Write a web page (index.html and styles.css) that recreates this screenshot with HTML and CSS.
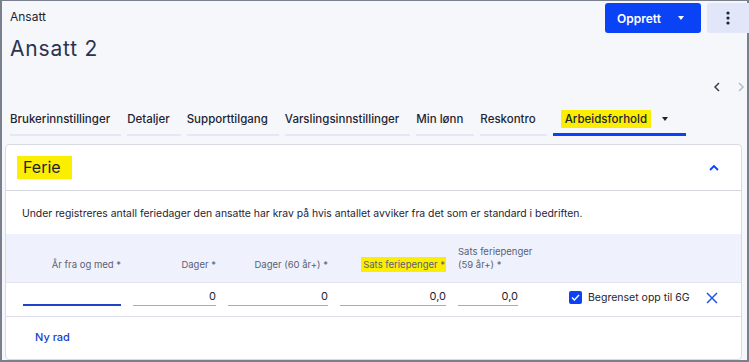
FILE: index.html
```html
<!DOCTYPE html>
<html lang="no">
<head>
<meta charset="utf-8">
<link rel="stylesheet" href="styles.css">
</head>
<body>
<div class="frame">
  <header class="top">
    <div class="titles">
      <div class="crumb">Ansatt</div>
      <h1 class="title">Ansatt 2</h1>
    </div>
    <div class="actions">
      <button class="btn-primary">Opprett <span class="caret-w"></span></button>
      <button class="btn-more"><svg width="4" height="14" viewBox="0 0 4 14"><circle cx="2" cy="2" r="1.6"/><circle cx="2" cy="7" r="1.6"/><circle cx="2" cy="12" r="1.6"/></svg></button>
    </div>
  </header>
  <div class="pager">
    <svg class="pg on" width="8" height="10" viewBox="0 0 8 10"><path d="M6 1 L2 5 L6 9" fill="none" stroke="currentColor" stroke-width="1.5"/></svg>
    <svg class="pg off" width="8" height="10" viewBox="0 0 8 10"><path d="M2 1 L6 5 L2 9" fill="none" stroke="currentColor" stroke-width="1.5"/></svg>
  </div>
  <nav class="tabs">
    <div class="tab">Brukerinnstillinger</div>
    <div class="tab">Detaljer</div>
    <div class="tab">Supporttilgang</div>
    <div class="tab">Varslingsinnstillinger</div>
    <div class="tab">Min lønn</div>
    <div class="tab">Reskontro</div>
    <div class="tab active"><span class="hl">Arbeidsforhold</span><span class="caret-d"></span></div>
  </nav>
  <section class="card">
    <div class="card-head">
      <h2 class="card-title"><span class="hl hl-big">Ferie</span></h2>
      <svg class="chev" width="10" height="7" viewBox="0 0 10 7"><path d="M1 6 L5 2 L9 6" fill="none" stroke="currentColor" stroke-width="1.8"/></svg>
    </div>
    <p class="desc">Under registreres antall feriedager den ansatte har krav på hvis antallet avviker fra det som er standard i bedriften.</p>
    <div class="grid ghead">
      <div class="h r">År fra og med *</div>
      <div class="h r">Dager *</div>
      <div class="h r">Dager (60 år+) *</div>
      <div class="h r"><span class="hl">Sats feriepenger *</span></div>
      <div class="h l">Sats feriepenger<br>(59 år+) *</div>
      <div></div>
    </div>
    <div class="grid grow">
      <div class="inp focus"></div>
      <div class="inp">0</div>
      <div class="inp">0</div>
      <div class="inp">0,0</div>
      <div class="inp">0,0</div>
      <div class="extra">
        <span class="chk"><svg width="9" height="7" viewBox="0 0 9 7"><path d="M1 3.5 L3.4 6 L8 1" fill="none" stroke="#fff" stroke-width="1.4"/></svg></span>
        <span class="chk-label">Begrenset opp til 6G</span>
        <svg class="xicon" width="12" height="12" viewBox="0 0 12 12"><path d="M1 1 L11 11 M11 1 L1 11" fill="none" stroke="currentColor" stroke-width="1.5"/></svg>
      </div>
    </div>
    <div class="foot"><a class="link">Ny rad</a></div>
  </section>
</div>
</body>
</html>
```
FILE: styles.css
```css
* { box-sizing: border-box; }
html, body { margin: 0; padding: 0; }
body {
  width: 749px; height: 362px; overflow: hidden;
  font-family: Inter, "Noto Sans", sans-serif;
  background: #f6f7fb;
  color: #1f2433;
}
.frame {
  width: 749px; height: 362px;
  border-left: 2px solid #7a7f8e;
  border-top: 1px solid #7a7f8e;
  border-right: 2px solid #7a7f8e;
  border-bottom: 2px solid #7a7f8e;
  display: flex; flex-direction: column;
}
.top { display: flex; justify-content: space-between; align-items: flex-start; height: 60px; }
.titles { padding: 8px 0 0 8px; }
.crumb { font-size: 12px; line-height: 16px; color: #1f2433; }
.title { margin: 12px 0 0; font-size: 21px; line-height: 24px; font-weight: 400; color: #2a3450; letter-spacing: 0.8px; }
.actions { display: flex; gap: 6px; padding-top: 2px; margin-right: -2px; }
.btn-primary {
  width: 96px; height: 30px; border: 0; border-radius: 3px;
  background: #0a43f5; color: #fff; font: 600 12px Inter, sans-serif;
  display: flex; align-items: center; padding-left: 12px; gap: 17px;
}
.caret-w { width: 0; height: 0; border-left: 3.5px solid transparent; border-right: 3.5px solid transparent; border-top: 4px solid #fff; }
.btn-more {
  width: 42px; height: 30px; border: 0; border-radius: 3px 0 0 3px;
  background: #e1e6f8; display: flex; align-items: center; justify-content: center; padding: 0;
}
.btn-more svg { fill: #1f2433; }
.pager { display: flex; justify-content: flex-end; gap: 16px; padding: 21px 2px 0 0; height: 39px; }
.pg.on { color: #3a3f4d; }
.pg.off { color: #b9bdc9; }
.tabs { display: flex; gap: 6px; padding: 0 0 0 8px; height: 36px; align-items: flex-end; }
.tab {
  font-size: 11.5px; font-weight: 500; line-height: 14px; color: #1f2433;
  padding: 0 11px 8px 0; border-bottom: 2px solid #e3e8f8;
}
.tab.active { border-bottom: 3px solid #0a43f5; padding: 0 18px 5px 8px; display: flex; align-items: center; gap: 11px; }
.hl { background: #fbee00; padding: 2px 4px; }
.caret-d { width: 0; height: 0; border-left: 3.5px solid transparent; border-right: 3.5px solid transparent; border-top: 4px solid #1f2433; }
.card {
  margin: 8px 5px 0 3px; background: #fff; border: 1px solid #d7dae2; border-radius: 4px;
  flex: 1; display: flex; flex-direction: column; overflow: hidden;
}
.card-head { height: 46px; flex: none; display: flex; align-items: center; justify-content: space-between; padding: 0 22px 0 11px; border-bottom: 1px solid #d3d6de; }
.card-title { margin: 0; font-size: 16px; font-weight: 400; line-height: 20px; }
.hl-big { padding: 2px 11px 3px 6px; display: inline-block; line-height: 18px; }
.chev { color: #0a43f5; }
.desc { margin: 0; font-size: 10.4px; line-height: 14px; padding: 16px 16px 13px; color: #1f2433; }
.grid { display: grid; grid-template-columns: 98px 83px 100px 106px 60px 1fr; column-gap: 12px; padding-left: 17px; flex: none; }
.ghead { background: #eff2fc; height: 49px; align-items: end; padding-bottom: 11px; border-bottom: 1px solid #e2e5ee; }
.h { font-size: 9.5px; line-height: 13px; color: #5a6076; white-space: nowrap; }
.h.r { text-align: right; }
.h .hl { padding: 2px 1px 2px 2px; }
.grow { height: 34px; align-items: start; border-bottom: 1px solid #dde0e8; padding-top: 6px; }
.inp { height: 17px; border-bottom: 1px solid #a8acb8; text-align: right; font-size: 11px; line-height: 15px; color: #1f2433; }
.inp.focus { border-bottom: 2px solid #1f44c8; }
.extra { display: flex; align-items: center; padding-left: 39px; height: 15px; margin-top: 1px; }
.chk { width: 13px; height: 13px; background: #0a43f5; border-radius: 2px; display: flex; align-items: center; justify-content: center; }
.chk-label { font-size: 10.5px; margin-left: 6px; color: #1f2433; }
.xicon { color: #1f55e8; margin-left: 16px; }
.foot { padding: 11px 0 0 29px; line-height: 14px; }
.link { font-size: 11px; font-weight: 500; color: #1740c8; }
```
